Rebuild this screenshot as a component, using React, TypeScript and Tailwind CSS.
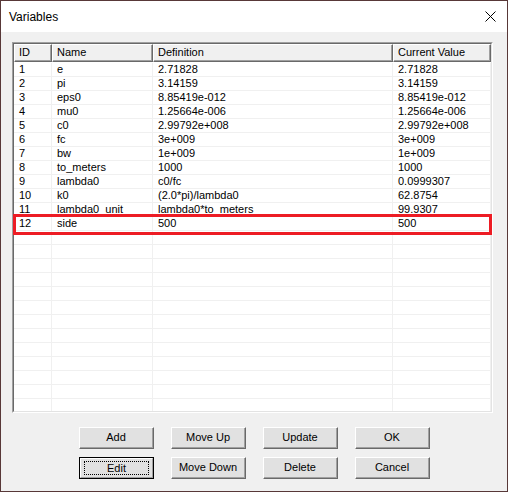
import React from 'react';

const rows: [string, string, string, string][] = [
  ['1', 'e', '2.71828', '2.71828'],
  ['2', 'pi', '3.14159', '3.14159'],
  ['3', 'eps0', '8.85419e-012', '8.85419e-012'],
  ['4', 'mu0', '1.25664e-006', '1.25664e-006'],
  ['5', 'c0', '2.99792e+008', '2.99792e+008'],
  ['6', 'fc', '3e+009', '3e+009'],
  ['7', 'bw', '1e+009', '1e+009'],
  ['8', 'to_meters', '1000', '1000'],
  ['9', 'lambda0', 'c0/fc', '0.0999307'],
  ['10', 'k0', '(2.0*pi)/lambda0', '62.8754'],
  ['11', 'lambda0_unit', 'lambda0*to_meters', '99.9307'],
  ['12', 'side', '500', '500'],
];

const cols = ['w-[38px]', 'w-[101px]', 'w-[240px]', 'w-[98px]'];
const headers = ['ID', 'Name', 'Definition', 'Current Value'];

const Button: React.FC<{ label: string; focused?: boolean }> = ({ label, focused }) => (
  <div
    className={
      'h-[22px] w-[75px] bg-[#e1e1e1] flex items-center justify-center ' +
      (focused
        ? 'border border-[#000000]'
        : 'border-t border-l border-t-white border-l-white border-b border-r border-b-[#696969] border-r-[#696969]')
    }
  >
    <div
      className={
        'w-full h-full flex items-center justify-center ' +
        (focused
          ? 'border-t border-l border-t-white border-l-white border-b border-r border-b-[#a0a0a0] border-r-[#a0a0a0]'
          : 'border-b border-r border-b-[#a0a0a0] border-r-[#a0a0a0]')
      }
    >
      <div
        className={
          'flex items-center justify-center ' +
          (focused ? 'w-[65px] h-[14px] border border-dotted border-black' : '')
        }
      >
        {label}
      </div>
    </div>
  </div>
);

export default function App() {
  const blanks = Array.from({ length: 14 });
  return (
    <div
      className="w-[508px] h-[492px] border border-[#583838] bg-[#f0f0f0] flex flex-col text-[11px] text-black overflow-hidden"
      style={{ fontFamily: '"Liberation Sans", Arial, sans-serif' }}
    >
      <div className="h-[31px] bg-white flex items-center justify-between pl-[8px] pr-[11px] shrink-0">
        <span className="text-[12px] leading-none">Variables</span>
        <svg width="11" height="11" viewBox="0 0 11 11">
          <path d="M0.5 0.5 L10.5 10.5 M10.5 0.5 L0.5 10.5" stroke="#000" strokeWidth="1" />
        </svg>
      </div>

      <div className="ml-[11px] mt-[10px] w-[481px] h-[371px] relative border-t border-l border-t-[#a0a0a0] border-l-[#a0a0a0] border-b border-r border-b-white border-r-white">
        <div className="w-full h-full bg-white border-t border-l border-t-[#696969] border-l-[#696969] border-b border-r border-b-[#e3e3e3] border-r-[#e3e3e3] overflow-hidden">
          <div className="flex h-[18px] bg-[#f0f0f0]">
            {headers.map((h, i) => (
              <div
                key={h}
                className={
                  cols[i] +
                  ' h-full border-t border-l border-t-white border-l-white border-b border-r border-b-[#696969] border-r-[#696969]'
                }
              >
                <div className="h-full flex items-center pl-[4px] border-b border-r border-b-[#a0a0a0] border-r-[#a0a0a0]">
                  {h}
                </div>
              </div>
            ))}
          </div>
          <div className="h-[1px]" />
          {rows.map((r) => (
            <div key={r[0]} className="flex h-[14px] leading-[13px]">
              {r.map((c, i) => (
                <div
                  key={i}
                  className={cols[i] + ' h-full pl-[5px] border-r border-b border-[#f0f0f0] whitespace-nowrap overflow-hidden'}
                >
                  {c}
                </div>
              ))}
            </div>
          ))}
          {blanks.map((_, k) => (
            <div key={'b' + k} className="flex h-[14px]">
              {cols.map((w, i) => (
                <div key={i} className={w + ' h-full border-r border-b border-[#f0f0f0]'} />
              ))}
            </div>
          ))}
        </div>
        <div className="absolute left-0 top-[171px] w-[479px] h-[21px] border-[3px] border-[#ed1c24] pointer-events-none" />
      </div>

      <div className="ml-[78px] mt-[14px] grid grid-cols-[75px_75px_75px_75px] gap-x-[17px] gap-y-[8px]">
        <Button label="Add" />
        <Button label="Move Up" />
        <Button label="Update" />
        <Button label="OK" />
        <Button label="Edit" focused />
        <Button label="Move Down" />
        <Button label="Delete" />
        <Button label="Cancel" />
      </div>
    </div>
  );
}
